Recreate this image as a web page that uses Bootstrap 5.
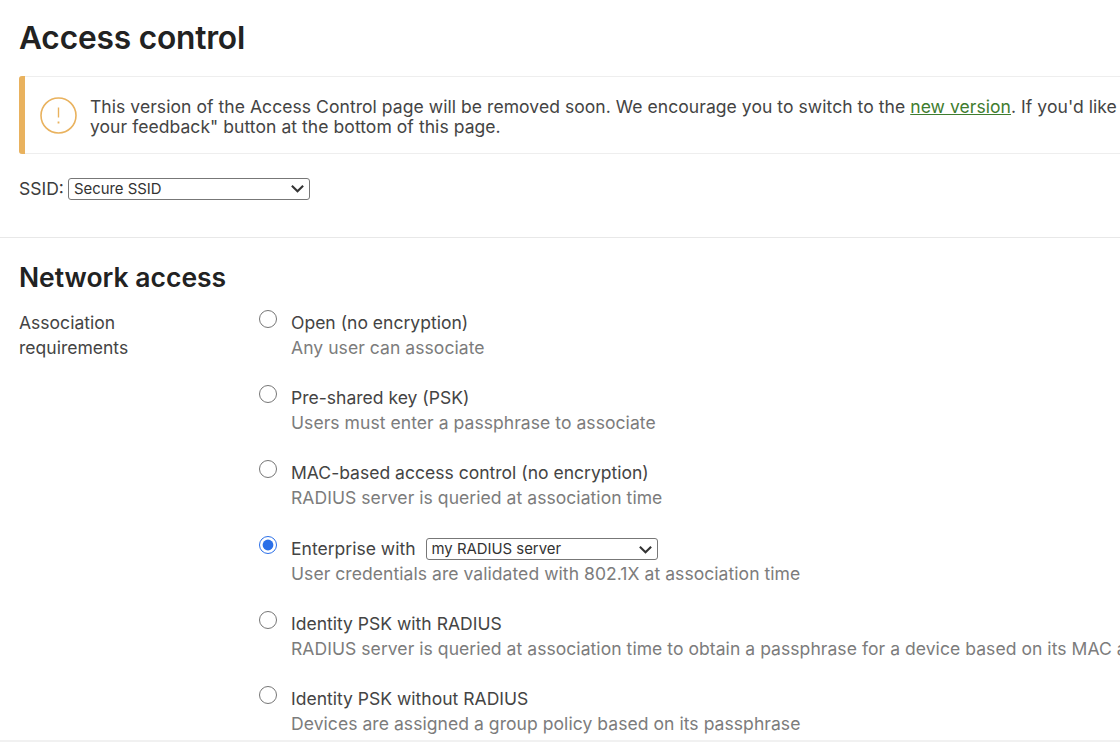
<!DOCTYPE html>
<html lang="en">
<head>
<meta charset="utf-8">
<title>Access control</title>
<link href="https://cdn.jsdelivr.net/npm/bootstrap@5.3.0/dist/css/bootstrap.min.css" rel="stylesheet">
<style>
html, body { height: 742px; overflow: hidden; background: #fff; }
body { font-family: Inter, "Liberation Sans", sans-serif; font-size: 17.55px; line-height: 1; color: #3c3c3c; }
.page-head { padding: 19px 0 0 19px; }
.page-title { font-family: Inter, sans-serif; font-weight: 600; font-size: 31.7px; line-height: 38px; color: #222; margin: 0; letter-spacing: -.2px; }
.notice { margin: 19px 0 0 19px; width: 1400px; height: 78px; border: 1px solid #eee; border-left: 0; border-radius: 3px; }
.notice-bar { flex: none; width: 6px; background: #e9b25e; border-radius: 3px 0 0 3px; align-self: stretch; margin: -1px 0; }
.notice-icon { margin: 0 13px 0 15px; flex: none; }
.notice-text { line-height: 20px; color: #444; white-space: nowrap; padding-top: 3px; letter-spacing: .05px; }
.notice-text a { color: #3f7d2f; }
.ssid-row { margin: 24px 0 0 19px; height: 23px; }
.form-select.tiny-select { font-family: Inter, sans-serif; font-size: 14.9px; line-height: 20px; height: 22px; min-height: 0; padding: 0 24px 0 5px; border: 1px solid #777; border-radius: 3px; background-color: #fff; background-image: url("data:image/svg+xml,%3csvg xmlns='http://www.w3.org/2000/svg' viewBox='0 0 16 16'%3e%3cpath fill='none' stroke='%23333' stroke-width='2.2' d='m2 5 6 6 6-6'/%3e%3c/svg%3e"); background-size: 15px 15px; background-position: right 4px center; color: #333; box-shadow: none; }
.ssid-select { width: 242px; margin-left: 4px; margin-top: -2px; }
.radius-select { width: 232px; margin-left: 10px; margin-top: 2px; }
.ssid-label { position: relative; top: -1px; }
.section-rule { margin: 36px 0 0; border-top: 1px solid #e8e8e8; }
.section-title { font-family: Inter, sans-serif; font-weight: 600; font-size: 26.5px; line-height: 30px; color: #222; margin: 24px 0 0 19px; }
.assoc { margin: 18px 0 0 19px; }
.assoc-label { width: 240px; flex: none; line-height: 25px; color: #444; }
.choice { height: 75.2px; white-space: nowrap; }
.choice input { width: 18px; height: 18px; margin: 0 14px 0 0; flex: none; accent-color: #2a6fe8; }
.choice-title { line-height: 25px; color: #444; }
.choice-desc { line-height: 25.5px; color: #7c7c7c; letter-spacing: .05px; }
.bottom-rule { position: fixed; left: 0; right: 0; top: 740px; height: 2px; background: #f1f1f1; }
</style>
</head>
<body>
<div class="page-head"><h1 class="page-title">Access control</h1></div>

<div class="notice d-flex align-items-center">
  <div class="notice-bar"></div>
  <svg class="notice-icon" width="37" height="37" viewBox="0 0 37 37" fill="none" stroke="#e9b25e">
    <circle cx="18.5" cy="18.5" r="17.5" stroke-width="1.6"/>
    <path d="M18.5 10.5v10" stroke-width="1.4"/>
    <path d="M18.5 24.5v2" stroke-width="1.8"/>
  </svg>
  <div class="notice-text">This version of the Access Control page will be removed soon. We encourage you to switch to the <a href="#">new version</a>. If you'd like to tell us what you think, use the "Give us<br>your feedback" button at the bottom of this page.</div>
</div>

<div class="ssid-row d-flex align-items-center">
  <label for="ssid" class="ssid-label">SSID:</label>
  <select id="ssid" class="form-select tiny-select ssid-select"><option>Secure SSID</option></select>
</div>

<div class="section-rule"></div>
<h2 class="section-title">Network access</h2>

<div class="assoc d-flex">
  <div class="assoc-label">Association<br>requirements</div>
  <div>
    <div class="choice d-flex align-items-start"><input type="radio" name="auth"><div><div class="choice-title">Open (no encryption)</div><div class="choice-desc">Any user can associate</div></div></div>
    <div class="choice d-flex align-items-start"><input type="radio" name="auth"><div><div class="choice-title">Pre-shared key (PSK)</div><div class="choice-desc">Users must enter a passphrase to associate</div></div></div>
    <div class="choice d-flex align-items-start"><input type="radio" name="auth"><div><div class="choice-title">MAC-based access control (no encryption)</div><div class="choice-desc">RADIUS server is queried at association time</div></div></div>
    <div class="choice d-flex align-items-start"><input type="radio" name="auth" checked><div><div class="choice-title d-flex align-items-center">Enterprise with <select class="form-select tiny-select radius-select"><option>my RADIUS server</option></select></div><div class="choice-desc">User credentials are validated with 802.1X at association time</div></div></div>
    <div class="choice d-flex align-items-start"><input type="radio" name="auth"><div><div class="choice-title">Identity PSK with RADIUS</div><div class="choice-desc">RADIUS server is queried at association time to obtain a passphrase for a device based on its MAC address</div></div></div>
    <div class="choice d-flex align-items-start"><input type="radio" name="auth"><div><div class="choice-title">Identity PSK without RADIUS</div><div class="choice-desc">Devices are assigned a group policy based on its passphrase</div></div></div>
  </div>
</div>
<div class="bottom-rule"></div>
<script src="https://cdn.jsdelivr.net/npm/bootstrap@5.3.0/dist/js/bootstrap.bundle.min.js"></script>
</body>
</html>
